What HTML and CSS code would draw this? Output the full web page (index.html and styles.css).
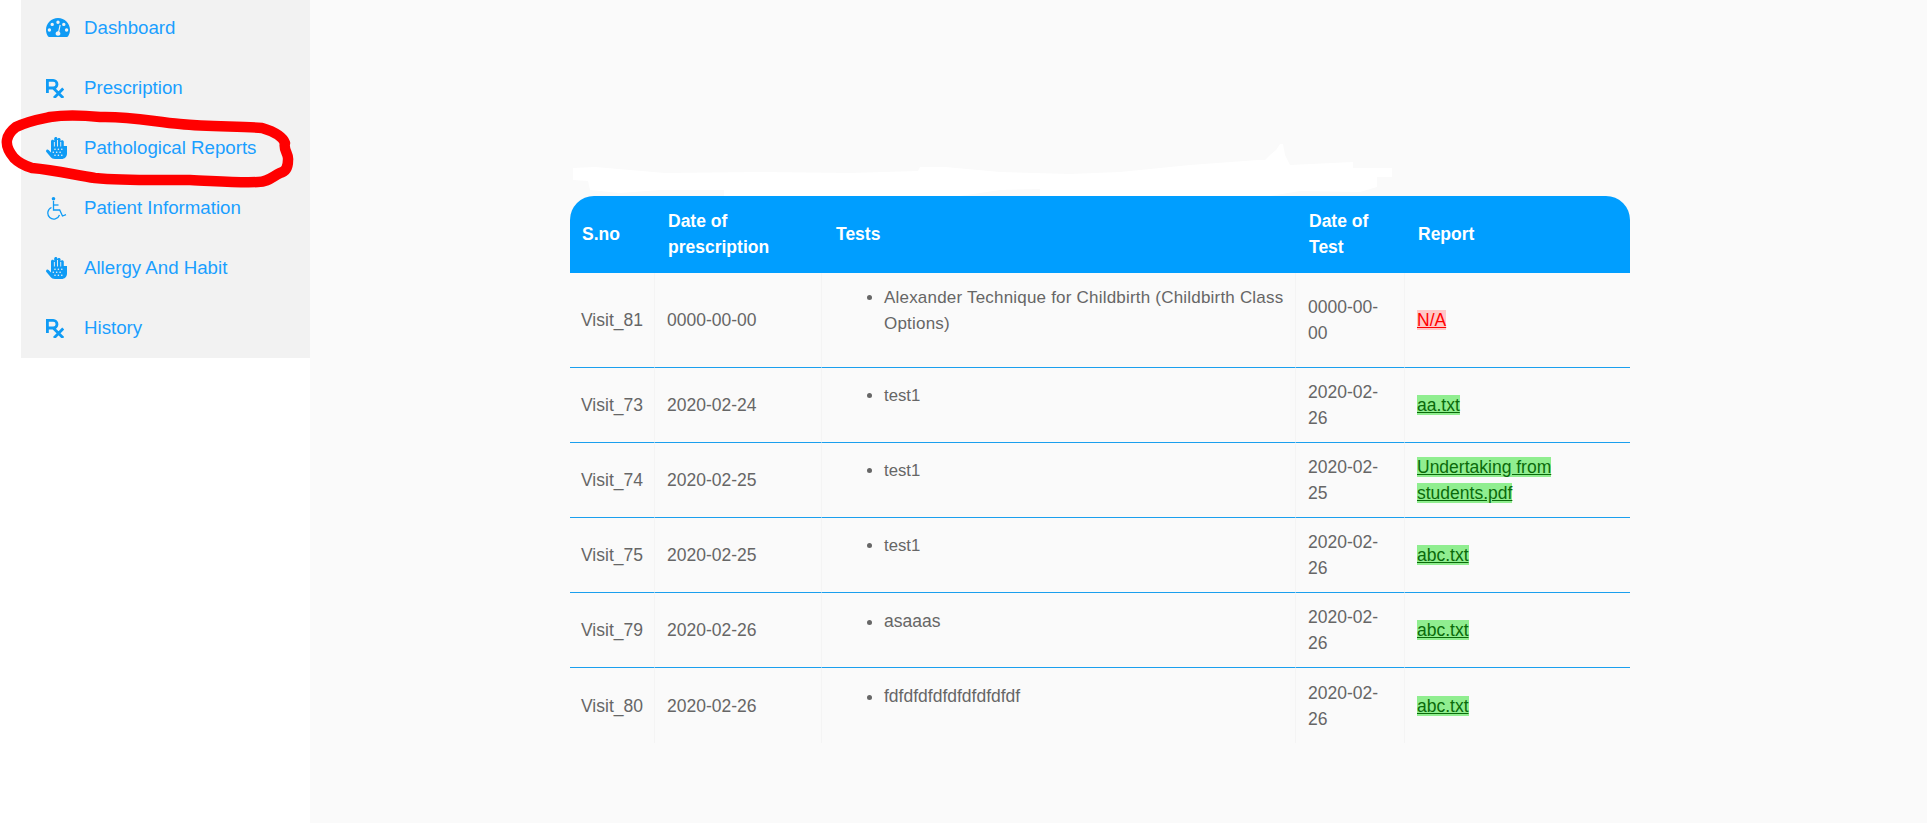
FILE: index.html
```html
<!DOCTYPE html>
<html lang="en">
<head>
<meta charset="utf-8">
<title>Pathological Reports</title>
<link rel="stylesheet" href="styles.css">
</head>
<body>
<svg width="0" height="0" class="defs">
  <defs>
    <symbol id="i-gauge" viewBox="0 0 24 20">
      <path fill-rule="evenodd" d="M12 0C5.400 0 0 5.300 0 11.800c0 2.300.7 4.600 1.900 6.400.3.4.8.7 1.300.7h17.600c.5 0 1-.3 1.300-.7 1.200-1.800 1.900-4.100 1.900-6.400C24 5.300 18.600 0 12 0zM12 2.500a1.700 1.700 0 1 1 0 3.400 1.700 1.700 0 0 1 0-3.400zM6.200 4.700a1.700 1.700 0 1 1 0 3.400 1.700 1.700 0 0 1 0-3.400zM17.800 4.700a1.700 1.700 0 1 1 0 3.400 1.700 1.700 0 0 1 0-3.400zM3.400 10.300a1.700 1.700 0 1 1 0 3.400 1.700 1.700 0 0 1 0-3.400zM20.600 10.300a1.700 1.700 0 1 1 0 3.400 1.700 1.700 0 0 1 0-3.400zM13.600 6.800l1.100.4-1.400 6.300c.7.5 1.100 1.200 1.100 2 0 1.300-1 2.300-2.400 2.300s-2.400-1-2.400-2.300c0-1.300 1-2.300 2.400-2.300l.2 0z"/>
    </symbol>
    <symbol id="i-rx" viewBox="0 0 18 19">
      <path fill="none" stroke="currentColor" stroke-width="2.800" d="M1.400 14V1.400H7.200a3.800 3.800 0 0 1 0 7.600H1.400M7.200 9l10 10M17.200 9.500L8 19"/>
    </symbol>
    <symbol id="i-hand" viewBox="0 0 21 22">
      <path fill-rule="evenodd" d="M5 4.400C5 3.400 5.700 2.800 6.600 2.800S8.200 3.400 8.200 4.400V1.600C8.200.7 8.900 0 9.800 0s1.600.7 1.600 1.600v1c0-.9.700-1.500 1.600-1.500s1.600.6 1.600 1.500v2.200c0-.9.700-1.500 1.600-1.500s1.600.6 1.600 1.500V9h3.200v7.500c0 3.300-2.500 5.500-5.500 5.500H9c-2 0-3.400-.8-4.600-2.200L.4 15c-.6-.7-.5-1.600.1-2.100s1.500-.4 2.100.2L5 15.400z M7.900 5V9.500h.9V5zM11.100 3V9.500h.9V3zM14.300 5V9.500h.9V5zM9 11.500a.8.800 0 1 0 0 1.600.8.800 0 0 0 0-1.600zM12.400 11.500a.8.800 0 1 0 0 1.600.8.800 0 0 0 0-1.600zM15.800 11.500a.8.800 0 1 0 0 1.600.8.800 0 0 0 0-1.600zM7.300 14.500a.8.800 0 1 0 0 1.600.8.800 0 0 0 0-1.600zM10.700 14.500a.8.800 0 1 0 0 1.600.8.800 0 0 0 0-1.600zM14.100 14.500a.8.800 0 1 0 0 1.600.8.800 0 0 0 0-1.600zM9 17.500a.8.800 0 1 0 0 1.600.8.800 0 0 0 0-1.600zM12.400 17.500a.8.800 0 1 0 0 1.600.8.800 0 0 0 0-1.600zM15.800 17.500a.8.800 0 1 0 0 1.600.8.800 0 0 0 0-1.600z"/>
    </symbol>
    <symbol id="i-wheel" viewBox="0 0 21 23">
      <circle cx="7.500" cy="1.800" r="1.800"/>
      <path d="M7.500 4v9h6.200l2.800 6 3.500-1.300" fill="none" stroke="currentColor" stroke-width="1.300"/>
      <path d="M7.500 8h5" fill="none" stroke="currentColor" stroke-width="1.300"/>
      <path d="M5.500 10.500a6 6 0 1 0 8 7.500" fill="none" stroke="currentColor" stroke-width="1.300"/>
    </symbol>
  </defs>
</svg>

<div class="shell">
  <aside class="side-col">
    <nav class="side">
      <a class="item" href="#"><span class="ico"><svg class="i-gauge"><use href="#i-gauge"/></svg></span>Dashboard</a>
      <a class="item" href="#"><span class="ico"><svg class="i-rx"><use href="#i-rx"/></svg></span>Prescription</a>
      <a class="item" href="#"><span class="ico"><svg class="i-hand"><use href="#i-hand"/></svg></span>Pathological Reports</a>
      <a class="item" href="#"><span class="ico"><svg class="i-wheel"><use href="#i-wheel"/></svg></span>Patient Information</a>
      <a class="item" href="#"><span class="ico"><svg class="i-hand"><use href="#i-hand"/></svg></span>Allergy And Habit</a>
      <a class="item" href="#"><span class="ico"><svg class="i-rx"><use href="#i-rx"/></svg></span>History</a>
    </nav>
  </aside>

  <main class="content">
    <table class="reports">
      <colgroup>
        <col class="c1"><col class="c2"><col class="c3"><col class="c4"><col class="c5">
      </colgroup>
      <thead>
        <tr><th>S.no</th><th>Date of prescription</th><th class="th-tests">Tests</th><th>Date of Test</th><th>Report</th></tr>
      </thead>
      <tbody>
        <tr class="first">
          <td>Visit_81</td><td>0000-00-00</td>
          <td class="tests"><ul><li class="long">Alexander Technique for Childbirth (Childbirth Class Options)</li></ul></td>
          <td>0000-00-00</td><td><a class="bad" href="#">N/A</a></td>
        </tr>
        <tr>
          <td>Visit_73</td><td>2020-02-24</td>
          <td class="tests"><ul><li class="short">test1</li></ul></td>
          <td>2020-02-26</td><td><a class="ok" href="#">aa.txt</a></td>
        </tr>
        <tr>
          <td>Visit_74</td><td>2020-02-25</td>
          <td class="tests"><ul><li class="short">test1</li></ul></td>
          <td>2020-02-25</td><td><a class="ok" href="#">Undertaking from students.pdf</a></td>
        </tr>
        <tr>
          <td>Visit_75</td><td>2020-02-25</td>
          <td class="tests"><ul><li class="short">test1</li></ul></td>
          <td>2020-02-26</td><td><a class="ok" href="#">abc.txt</a></td>
        </tr>
        <tr>
          <td>Visit_79</td><td>2020-02-26</td>
          <td class="tests"><ul><li>asaaas</li></ul></td>
          <td>2020-02-26</td><td><a class="ok" href="#">abc.txt</a></td>
        </tr>
        <tr>
          <td>Visit_80</td><td>2020-02-26</td>
          <td class="tests"><ul><li>fdfdfdfdfdfdfdfdfdf</li></ul></td>
          <td>2020-02-26</td><td><a class="ok" href="#">abc.txt</a></td>
        </tr>
      </tbody>
    </table>
  </main>
</div>

<svg class="marks" width="1927" height="823" viewBox="0 0 1927 823">
  <path class="scrub" d="M573 168L595 167L665 173L760 172L850 173L918 171L920 167L945 167L1000 172L1070 174L1120 172L1190 165L1258 160L1265 160L1270 155L1276 150L1280 144L1283 144L1285 155L1290 165L1353 162V168H1392V177H1377V187L1360 192L1300 191L1270 196H1040V189L1000 190L960 196H724V190L660 190L620 193L590 190L588 181L573 180Z"/>
  <path class="red" d="M50 117C70 114 90 116 100 117C130 116 155 122 180 124C210 127 240 126 262 128C272 131 282 135 285 143C283 150 289 154 288 160C288 168 285 172 280 173C272 177 268 182 258 182C240 183 215 181 190 180C160 180 125 181 95 178C75 175 55 170 32 168C22 165 18 162 14 158C9 152 6 146 7 140C8 134 12 130 16 127C28 121 40 119 50 117Z"/>
</svg>
</body>
</html>
```
FILE: styles.css
```css
* { box-sizing: border-box; }
html, body { margin: 0; height: 823px; overflow: hidden; background: #fff; }
body { position: relative; font-family: "Liberation Sans", Arial, sans-serif; font-size: 17.5px; color: #666; }
.defs { position: absolute; }

.shell { display: flex; height: 823px; }
.side-col { width: 310px; padding-left: 21px; flex: none; }
.side { background: #f2f2f2; margin-top: -2px; height: 360px; }
.item { display: flex; align-items: center; height: 60px; padding-left: 25px; color: #1a9fff; text-decoration: none; font-size: 18.7px; }
.item svg { fill: #0f9bf5; color: #0f9bf5; display: block; }
.ico { width: 38px; flex: none; }
.i-gauge { width: 24px; height: 20px; }
.i-rx { width: 18px; height: 19px; }
.i-hand { width: 21px; height: 22px; }
.i-wheel { width: 21px; height: 23px; }

.content { flex: 1; background: #fafafa; padding: 196px 297px 0 260px; }
.reports { width: 1060px; border-collapse: separate; border-spacing: 0; table-layout: fixed; line-height: 26px; }
.c1 { width: 85px; } .c2 { width: 167px; } .c3 { width: 474px; } .c4 { width: 109px; } .c5 { width: 225px; }
.reports th { background: #009eff; color: #fff; font-weight: 700; text-align: left; height: 77px; padding: 0 13px 2px 13px; vertical-align: middle; }
.reports th.th-tests { padding-left: 14px; }
.reports th:first-child { border-top-left-radius: 24px; padding-left: 12px; }
.reports th:last-child { border-top-right-radius: 24px; }
.reports td { height: 75px; padding: 0 12px; vertical-align: middle; border-bottom: 1px solid #1a9fee; border-right: 1px solid #f4f4f4; }
.reports td:first-child { padding-left: 11px; }
.reports td:last-child { border-right: 0; }
.reports tr.first td { height: 95px; }
.reports tbody tr:last-child td { border-bottom: 0; }
.reports td.tests { vertical-align: top; padding: 15px 0 0 0; }
.reports tr.first td.tests { padding-top: 12px; }
.tests ul { margin: 0; padding-left: 62px; }
.tests li::marker { color: #666; }
.tests .long { font-size: 17px; letter-spacing: 0.2px; }
.tests .short { font-size: 16.7px; }

.bad { background: #ffc8c8; color: #f00; }
.ok { background: #90ee90; color: #0a6a0a; }

.marks { position: absolute; left: 0; top: 0; pointer-events: none; }
.scrub { fill: #fff; }
.red { fill: none; stroke: #f00; stroke-width: 10.500; stroke-linejoin: round; }
```
